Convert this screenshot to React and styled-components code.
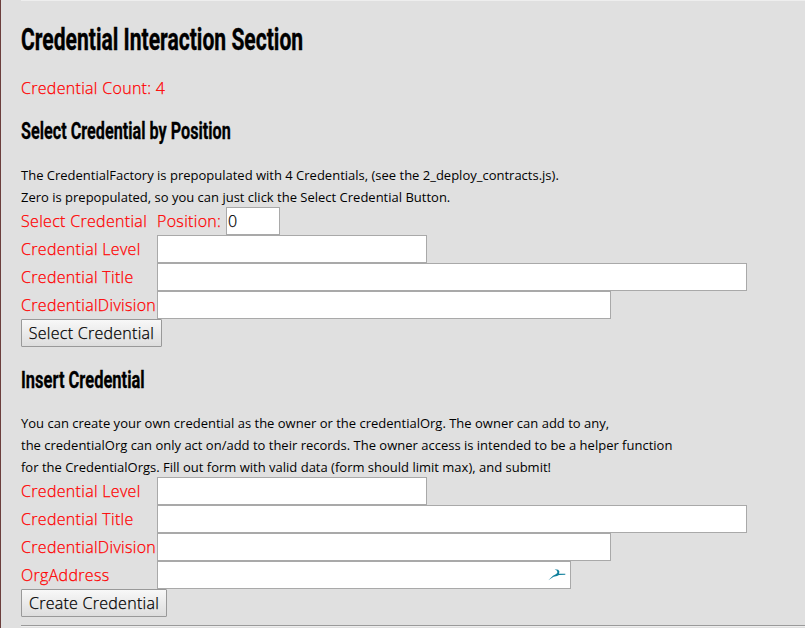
import React from "react";
import styled, { createGlobalStyle } from "styled-components";

const GlobalStyle = createGlobalStyle`
  *, *::before, *::after { box-sizing: border-box; }
  body {
    margin: 0;
    background: #e0e0e0;
    color: #000;
    font-family: "Open Sans", "Noto Sans", sans-serif;
    overflow: hidden;
  }
`;

const Page = styled.main`
  height: 628px;
  padding-left: 20px;
  border-left: 1px solid #6b3e3c;
  overflow: hidden;
`;

const Rule = styled.hr`
  height: 2px;
  margin: 0;
  border: 0;
  border-top: 1px solid #9a9a9a;
  border-bottom: 1px solid #eee;
  margin-top: ${(p) => p.$offset}px;
`;

const Title = styled.h1`
  height: 44px;
  margin: 17px 0 0;
  font: 700 31px/44px Roboto, sans-serif;
  white-space: nowrap;
  transform: scaleX(${(p) => p.$stretch});
  transform-origin: 0 50%;
  -webkit-text-stroke: 0.4px #000;
`;

const Subtitle = styled.h2`
  height: 32px;
  margin: ${(p) => p.$top}px 0 0;
  font: 700 23px/32px Roboto, sans-serif;
  white-space: nowrap;
  transform: scaleX(${(p) => p.$stretch});
  transform-origin: 0 50%;
  -webkit-text-stroke: 0.3px #000;
`;

const Count = styled.p`
  height: 28px;
  margin: 12px 0 0;
  color: #f00;
  font-size: 16px;
  font-weight: 300;
  line-height: 28px;
  letter-spacing: 0.3px;
  -webkit-text-stroke: 0.25px currentColor;
`;

const Note = styled.p`
  margin: ${(p) => p.$top}px 0 -1px;
  font-size: 13px;
  line-height: 22px;
  white-space: nowrap;
`;

const Row = styled.div`
  display: flex;
  align-items: center;
  height: 28px;
  color: #f00;
  font-size: 16px;
  font-weight: 300;
  letter-spacing: 0.31px;
  -webkit-text-stroke: 0.25px currentColor;
  white-space: nowrap;
`;

const Label = styled.label`
  flex: none;
  width: 136px;
`;

const PositionLabel = styled.label`
  flex: none;
  width: 69px;
`;

const Field = styled.span`
  display: flex;
  align-items: center;
  width: ${(p) => p.$width}px;
  height: 28px;
  padding: 0 ${(p) => (p.$icon ? 4 : 1)}px 0 1px;
  border: 1px solid #a9a9a9;
  background: #fff;
`;

const Input = styled.input`
  flex: 1;
  min-width: 0;
  padding: 0;
  border: 0;
  outline: 0;
  background: none;
  color: #000;
  font: 300 16px "Open Sans", sans-serif;
  -webkit-text-stroke: 0.25px #000;
`;

const Button = styled.button`
  display: block;
  width: ${(p) => p.$width}px;
  height: 28px;
  padding: 0;
  border: 1px solid #999;
  border-radius: 1px;
  background: linear-gradient(#f8f8f8, #dddddd);
  color: #000;
  font: 300 16px/24px "Open Sans", sans-serif;
  letter-spacing: 0.27px;
  -webkit-text-stroke: 0.25px #000;
  white-space: nowrap;
`;

const SwiftIcon = () => (
  <svg width="18" height="14" viewBox="0 0 18 14" aria-hidden="true">
    <path d="M0.3 12.2 L5 7.8 L8.3 6 L9.4 4.6 L9 2.8 L6.6 1.2 L10.2 1.8 L11.4 3.6 L11 5.7 L17.3 5.7 V6.8 L11 7 L9 8 L5.6 8.8 Z" fill="#0f7f9c" />
  </svg>
);

const FormRow = ({ label, width, icon }) => (
  <Row>
    <Label>{label}</Label>
    <Field $width={width} $icon={icon}>
      <Input aria-label={label} />
      {icon && <SwiftIcon />}
    </Field>
  </Row>
);

export default function App() {
  return (
    <>
      <GlobalStyle />
      <Page>
        <Rule $offset={-1} />
        <Title $stretch={0.68}>Credential Interaction Section</Title>
        <Count>Credential Count: 4</Count>
        <Subtitle $top={14} $stretch={0.704}>Select Credential by Position</Subtitle>
        <Note $top={16}>
          The CredentialFactory is prepopulated with 4 Credentials, (see the 2_deploy_contracts.js).
          <br />
          Zero is prepopulated, so you can just click the Select Credential Button.
        </Note>
        <Row>
          <Label>Select Credential</Label>
          <PositionLabel>Position:</PositionLabel>
          <Field $width={54}>
            <Input aria-label="Position" defaultValue="0" />
          </Field>
        </Row>
        <FormRow label="Credential Level" width={270} />
        <FormRow label="Credential Title" width={590} />
        <FormRow label="CredentialDivision" width={454} />
        <Button $width={141}>Select Credential</Button>
        <Subtitle $top={18} $stretch={0.717}>Insert Credential</Subtitle>
        <Note $top={15}>
          You can create your own credential as the owner or the credentialOrg. The owner can add to any,
          <br />
          the credentialOrg can only act on/add to their records. The owner access is intended to be a helper function
          <br />
          for the CredentialOrgs. Fill out form with valid data (form should limit max), and submit!
        </Note>
        <FormRow label="Credential Level" width={270} />
        <FormRow label="Credential Title" width={590} />
        <FormRow label="CredentialDivision" width={454} />
        <FormRow label="OrgAddress" width={414} icon />
        <Button $width={146}>Create Credential</Button>
        <Rule $offset={8} />
      </Page>
    </>
  );
}
